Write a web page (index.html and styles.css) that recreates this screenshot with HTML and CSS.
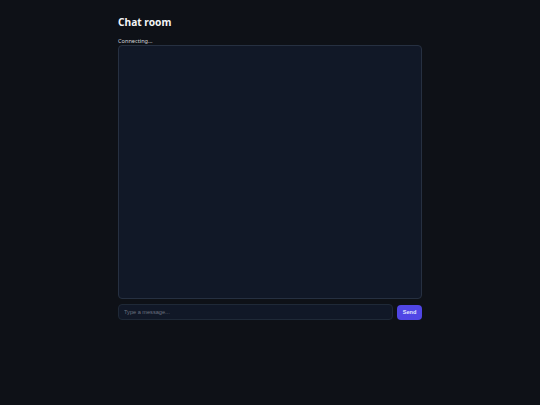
FILE: index.html
```html
<!DOCTYPE html>
<html lang="en">
<head>
  <meta charset="UTF-8">
  <meta name="viewport" content="width=device-width, initial-scale=1.0">
  <title>Chat room</title>
  <link rel="stylesheet" href="styles.css">
</head>
<body>
  <div class="chat">
    <h1>Chat room</h1>
    <div class="status" id="status">Connecting...</div>
    <div class="messages" id="messages"></div>
    <form class="composer" id="composer">
      <input type="text" id="message" placeholder="Type a message..." autocomplete="off">
      <button type="submit" class="send-btn">Send</button>
    </form>
  </div>
</body>
</html>
```

FILE: styles.css
```css
* {
  margin: 0;
  padding: 0;
  box-sizing: border-box;
}

body {
  font-family: 'Noto Sans', 'Open Sans', sans-serif;
  background: #0e1117;
  color: #e5e7eb;
  min-height: 100vh;
}

.chat {
  width: 304px;
  margin: 0 auto;
  padding-top: 15px;
}

h1 {
  font-size: 10.2px;
  font-weight: 700;
  line-height: 14px;
  color: #f3f4f6;
}

.status {
  margin-top: 9px;
  font-size: 5.6px;
  line-height: 7px;
  color: #d1d5db;
}

.messages {
  height: 254px;
  background: #111827;
  border: 1px solid #263041;
  border-radius: 4px;
}

.composer {
  display: flex;
  align-items: center;
  gap: 4px;
  margin-top: 5px;
}

.composer input {
  flex: 1;
  height: 16px;
  padding: 0 5px;
  background: #111827;
  border: 1px solid #1f2937;
  border-radius: 4px;
  color: #e5e7eb;
  font-family: 'Liberation Sans', Arial, sans-serif;
  font-size: 5.6px;
  outline: none;
}

.composer input::placeholder {
  color: #6b7280;
}

.send-btn {
  width: 25px;
  height: 15px;
  border: none;
  border-radius: 4px;
  background: #5046e5;
  color: #e0e7ff;
  font-family: 'Liberation Sans', Arial, sans-serif;
  font-size: 5.6px;
  font-weight: 700;
  cursor: pointer;
}
```
